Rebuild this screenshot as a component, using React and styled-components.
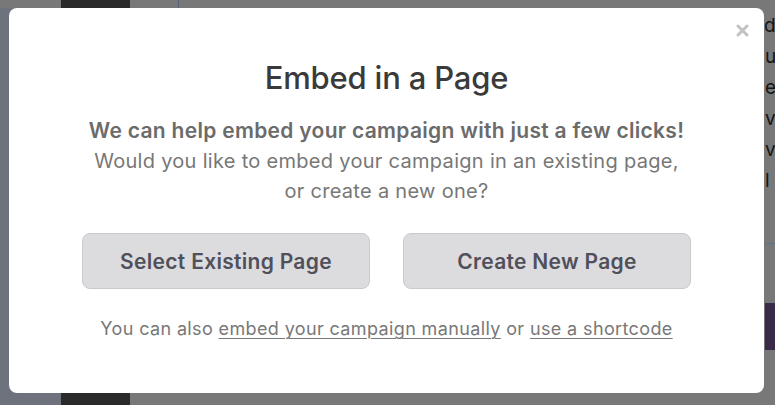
import React from 'react';
import styled, { createGlobalStyle } from 'styled-components';

const GlobalStyle = createGlobalStyle`
  html, body {
    margin: 0;
    padding: 0;
    height: 100%;
    overflow: hidden;
  }
  body {
    font-family: Inter, "Noto Sans", sans-serif;
    background: #787878;
  }
`;

/* the page behind the overlay, already dimmed */
const Backdrop = styled.div`
  display: flex;
  height: 405px;
  width: 775px;
`;

const SideMenu = styled.div`
  width: 61px;
  background: linear-gradient(#787878 0, #787878 8px, #6d727c 8px);
`;

const AdminBar = styled.div`
  width: 69px;
  background: #2a2a2a;
`;

const Main = styled.div`
  flex: 1;
  display: flex;
  flex-direction: column;
  background: #787878;
`;

const TopRule = styled.div`
  display: flex;
  height: 8px;
  padding-left: 48px;
`;

const Tick = styled.div`
  width: 1px;
  background: #56657f;
`;

const Body = styled.div`
  flex: 1;
  display: flex;
  justify-content: flex-end;
`;

const EdgeColumn = styled.div`
  width: 10px;
  overflow: hidden;
  display: flex;
  flex-direction: column;
  padding-top: 2px;
`;

const EdgeLine = styled.div`
  font-size: 19px;
  line-height: 31px;
  color: #151515;
  white-space: nowrap;
  margin-left: ${p => p.$shift || 0}px;
`;

const EdgeRule = styled.div`
  height: 1px;
  background: #5b6f90;
  margin-top: 47px;
`;

const EdgeBlock = styled.div`
  height: 47px;
  background: #392b47;
  margin-top: 59px;
`;

/* modal */
const Modal = styled.div`
  position: fixed;
  top: 8px;
  left: 9px;
  width: 755px;
  height: 385px;
  box-sizing: border-box;
  background: #ffffff;
  border-radius: 8px;
  padding-top: 51px;
  display: flex;
  flex-direction: column;
  align-items: center;
  text-align: center;
`;

const Close = styled.button`
  position: absolute;
  top: 15px;
  right: 15px;
  width: 14px;
  height: 14px;
  padding: 0;
  border: 0;
  background: none;
  display: flex;
  align-items: center;
  justify-content: center;
  cursor: pointer;
`;

const Title = styled.h2`
  margin: 0;
  font-size: 31px;
  line-height: 38px;
  font-weight: 500;
  color: #3a3a3a;
  letter-spacing: -0.2px;
`;

const Intro = styled.div`
  margin-top: 19px;
  font-size: 20px;
  line-height: 30px;
  letter-spacing: 0.3px;
  color: #777777;
`;

const Lead = styled.div`
  font-size: 21px;
  font-weight: 600;
  color: #6b6b6b;
`;

const Actions = styled.div`
  display: flex;
  gap: 33px;
  margin-top: 27px;
`;

const ActionButton = styled.button`
  width: 288px;
  height: 56px;
  box-sizing: border-box;
  border: 1px solid #cacacd;
  border-radius: 8px;
  background: #dcdcdf;
  color: #50505a;
  font-family: inherit;
  font-size: 21px;
  font-weight: 600;
  letter-spacing: 0.3px;
  cursor: pointer;
`;

const Footer = styled.p`
  margin: 27px 0 0;
  font-size: 18px;
  line-height: 26px;
  letter-spacing: 0.37px;
  color: #787878;
`;

const Link = styled.a`
  color: inherit;
  text-decoration: underline;
  text-underline-offset: 3px;
  text-decoration-thickness: 1px;
`;

const CloseIcon = () => (
  <svg width="13" height="13" viewBox="0 0 13 13">
    <path d="M2 2 L11 11 M11 2 L2 11" stroke="#c2c2c2" strokeWidth="3" strokeLinecap="round" />
  </svg>
);

const App = () => {
  return (
    <>
      <GlobalStyle />
      <Backdrop>
        <SideMenu />
        <AdminBar />
        <Main>
          <TopRule>
            <Tick />
          </TopRule>
          <Body>
            <EdgeColumn>
              <EdgeLine $shift={-1}>d</EdgeLine>
              <EdgeLine>ur</EdgeLine>
              <EdgeLine>e</EdgeLine>
              <EdgeLine>vi</EdgeLine>
              <EdgeLine>v,</EdgeLine>
              <EdgeLine>l</EdgeLine>
              <EdgeRule />
              <EdgeBlock />
            </EdgeColumn>
          </Body>
        </Main>
      </Backdrop>

      <Modal>
        <Close aria-label="Close">
          <CloseIcon />
        </Close>
        <Title>Embed in a Page</Title>
        <Intro>
          <Lead>We can help embed your campaign with just a few clicks!</Lead>
          <div>Would you like to embed your campaign in an existing page,</div>
          <div>or create a new one?</div>
        </Intro>
        <Actions>
          <ActionButton>Select Existing Page</ActionButton>
          <ActionButton>Create New Page</ActionButton>
        </Actions>
        <Footer>
          You can also <Link href="#">embed your campaign manually</Link> or{' '}
          <Link href="#">use a shortcode</Link>
        </Footer>
      </Modal>
    </>
  );
};

export default App;
